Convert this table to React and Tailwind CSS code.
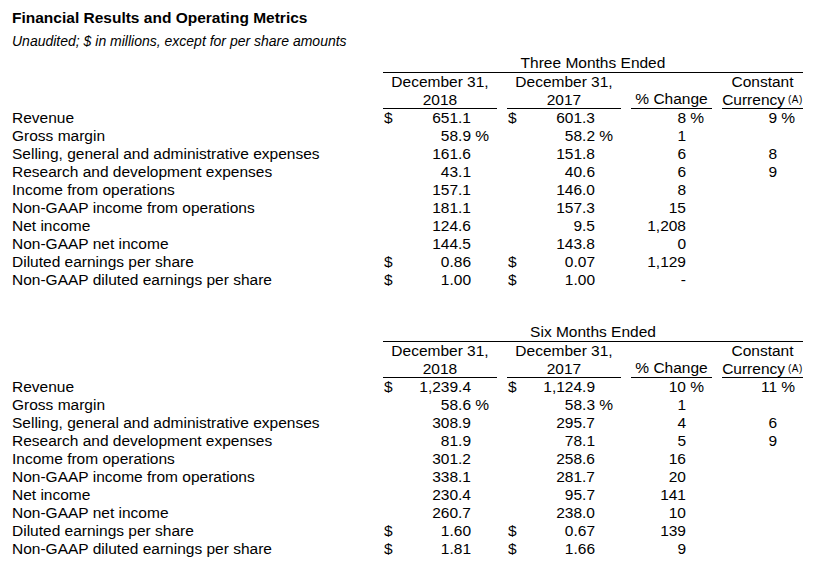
const THREE = [
  ["Revenue", ["$", "651.1"], ["$", "601.3"], ["8", " %"], ["9", " %"]],
  ["Gross margin", ["", "58.9", " %"], ["", "58.2", " %"], ["1"], [""]],
  ["Selling, general and administrative expenses", ["", "161.6"], ["", "151.8"], ["6"], ["8"]],
  ["Research and development expenses", ["", "43.1"], ["", "40.6"], ["6"], ["9"]],
  ["Income from operations", ["", "157.1"], ["", "146.0"], ["8"], [""]],
  ["Non-GAAP income from operations", ["", "181.1"], ["", "157.3"], ["15"], [""]],
  ["Net income", ["", "124.6"], ["", "9.5"], ["1,208"], [""]],
  ["Non-GAAP net income", ["", "144.5"], ["", "143.8"], ["0"], [""]],
  ["Diluted earnings per share", ["$", "0.86"], ["$", "0.07"], ["1,129"], [""]],
  ["Non-GAAP diluted earnings per share", ["$", "1.00"], ["$", "1.00"], ["-"], [""]],
];

const SIX = [
  ["Revenue", ["$", "1,239.4"], ["$", "1,124.9"], ["10", " %"], ["11", " %"]],
  ["Gross margin", ["", "58.6", " %"], ["", "58.3", " %"], ["1"], [""]],
  ["Selling, general and administrative expenses", ["", "308.9"], ["", "295.7"], ["4"], ["6"]],
  ["Research and development expenses", ["", "81.9"], ["", "78.1"], ["5"], ["9"]],
  ["Income from operations", ["", "301.2"], ["", "258.6"], ["16"], [""]],
  ["Non-GAAP income from operations", ["", "338.1"], ["", "281.7"], ["20"], [""]],
  ["Net income", ["", "230.4"], ["", "95.7"], ["141"], [""]],
  ["Non-GAAP net income", ["", "260.7"], ["", "238.0"], ["10"], [""]],
  ["Diluted earnings per share", ["$", "1.60"], ["$", "0.67"], ["139"], [""]],
  ["Non-GAAP diluted earnings per share", ["$", "1.81"], ["$", "1.66"], ["9"], [""]],
];

// money column: $ on the left, figure ends 88px in, " %" hangs after it
function MoneyCell({ cur, value, suffix }) {
  return (
    <div className="flex w-[114px]">
      <span className="w-[20px] pl-px">{cur}</span>
      <span className="w-[68px] text-right">{value}</span>
      <span className="w-[26px] whitespace-pre">{suffix}</span>
    </div>
  );
}

function PctCell({ value, suffix }) {
  return (
    <div className="flex w-[81px]">
      <span className="w-[55px] text-right">{value}</span>
      <span className="w-[26px] whitespace-pre">{suffix}</span>
    </div>
  );
}

function Section({ title, rows }) {
  return (
    <div className="flex flex-col">
      <div className="flex">
        <div className="w-[371px]" />
        <div className="w-[420px] border-b border-black text-center h-[19px]">{title}</div>
      </div>
      <div className="flex">
        <div className="w-[371px]" />
        <div className="flex gap-[10px] h-[36px]">
          <div className="w-[114px] border-b border-black text-center">
            <div>December 31,</div>
            <div>2018</div>
          </div>
          <div className="w-[114px] border-b border-black text-center">
            <div>December 31,</div>
            <div>2017</div>
          </div>
          <div className="w-[81px] border-b border-black text-center flex flex-col justify-end">
            <div className="whitespace-nowrap">% Change</div>
          </div>
          <div className="w-[81px] border-b border-black text-center">
            <div>Constant</div>
            <div className="whitespace-nowrap">
              Currency<sup className="text-[10px] tracking-[0.5px] ml-[3px] relative -top-[2px]">(A)</sup>
            </div>
          </div>
        </div>
      </div>
      {rows.map((r, i) => (
        <div key={i} className="flex">
          <div className="w-[371px]">{r[0]}</div>
          <div className="flex gap-[10px]">
            <MoneyCell cur={r[1][0]} value={r[1][1]} suffix={r[1][2]} />
            <MoneyCell cur={r[2][0]} value={r[2][1]} suffix={r[2][2]} />
            <PctCell value={r[3][0]} suffix={r[3][1]} />
            <PctCell value={r[4][0]} suffix={r[4][1]} />
          </div>
        </div>
      ))}
    </div>
  );
}

export default function App() {
  return (
    <div className="w-[836px] h-[567px] bg-white text-black pl-[12px] pt-[8px] font-['Liberation_Sans',Arial,sans-serif] text-[15.5px] leading-[18px]">
      <div className="font-bold leading-[20px]">Financial Results and Operating Metrics</div>
      <div className="italic text-[14px] leading-[18px] mt-[4px]">
        Unaudited; $ in millions, except for per share amounts
      </div>
      <div className="mt-[4px]">
        <Section title="Three Months Ended" rows={THREE} />
      </div>
      <div className="mt-[34px]">
        <Section title="Six Months Ended" rows={SIX} />
      </div>
    </div>
  );
}
